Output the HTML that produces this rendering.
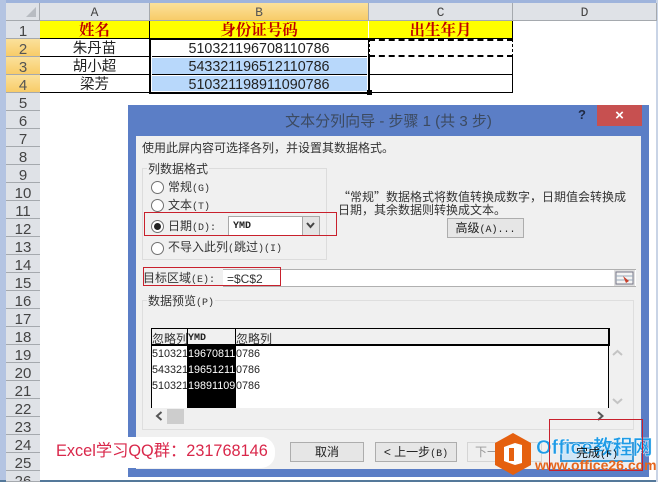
<!DOCTYPE html>
<html><head><meta charset="utf-8">
<style>
html,body{margin:0;padding:0;background:#fff}
#p{position:relative;width:658px;height:482px;overflow:hidden;background:#fff;font-family:"Liberation Sans","WenQuanYi Zen Hei","Noto Sans CJK SC",sans-serif;font-size:12px;color:#222}
#p div{position:absolute;box-sizing:border-box;white-space:nowrap}
.rh{left:6px;width:34px;height:18px;background:#dfe2e7;border-bottom:1px solid #a5a9ae;text-align:center;font:15px/21px "Liberation Sans",sans-serif;color:#444}
.rh.s{background:linear-gradient(#fbe19b,#f8cc68);color:#555}
.ch{top:3px;height:18px;background:#dfe2e7;border-right:1px solid #a5a9ae;border-bottom:1px solid #a5a9ae;text-align:center;font:13px/20px "Liberation Mono",monospace;color:#444}
.y{background:#ffff00;color:#c00000;font-weight:bold;font-size:15.500px;line-height:20px;text-align:center;top:21px;height:17px;font-family:"Liberation Sans","Noto Serif CJK SC",serif}
.c{height:18px;text-align:center;font-size:14.500px;line-height:21px;color:#222}
.n{font-size:14.300px;line-height:20px}
.h{background:#000}
.t{line-height:14px;color:#333}
.l{font:10px/14px "Liberation Mono",monospace}
.q{font-family:"Noto Sans CJK SC",sans-serif}
.r{width:13px;height:13px;border-radius:50%;background:#fff;border:1px solid #707070}
.red{border:1px solid #c8202c}
.b{background:#e6e6e6;border:1px solid #adadad;text-align:center;line-height:18px;color:#222}
.d{font-size:10.800px;line-height:16px;color:#222;overflow:hidden}
</style></head><body><div id="p">
<div style="left:0;top:0;width:658px;height:3px;background:#9fb4dc"></div>
<div style="left:0;top:0;width:6px;height:482px;background:#b4c4e2"></div>
<div style="left:0;top:480px;width:658px;height:2px;background:#54789a"></div>
<div style="left:656px;top:0;width:2px;height:482px;background:#c9d4e6"></div>

<div style="left:6px;top:3px;width:34px;height:18px;background:#dfe2e7;border-right:1px solid #a5a9ae;border-bottom:1px solid #a5a9ae"></div>
<svg style="position:absolute;left:26px;top:7px" width="11" height="11"><path d="M10 0V10H0Z" fill="#b8bcc2"/></svg>
<div class="ch" style="left:40px;width:110px">A</div>
<div class="ch" style="left:150px;width:219px;background:linear-gradient(#fbe19b,#f8cc68);color:#555">B</div>
<div class="ch" style="left:369px;width:144px">C</div>
<div class="ch" style="left:513px;width:144px">D</div>

<div class="rh" style="top:21px">1</div>
<div class="rh s" style="top:39px">2</div>
<div class="rh s" style="top:57px">3</div>
<div class="rh s" style="top:75px">4</div>
<div class="rh" style="top:93px">5</div>
<div class="rh" style="top:111px">6</div>
<div class="rh" style="top:129px">7</div>
<div class="rh" style="top:147px">8</div>
<div class="rh" style="top:165px">9</div>
<div class="rh" style="top:183px">10</div>
<div class="rh" style="top:201px">11</div>
<div class="rh" style="top:219px">12</div>
<div class="rh" style="top:237px">13</div>
<div class="rh" style="top:255px">14</div>
<div class="rh" style="top:273px">15</div>
<div class="rh" style="top:291px">16</div>
<div class="rh" style="top:309px">17</div>
<div class="rh" style="top:327px">18</div>
<div class="rh" style="top:345px">19</div>
<div class="rh" style="top:363px">20</div>
<div class="rh" style="top:381px">21</div>
<div class="rh" style="top:399px">22</div>
<div class="rh" style="top:417px">23</div>
<div class="rh" style="top:435px">24</div>
<div class="rh" style="top:453px">25</div>
<div class="rh" style="top:471px;height:11px;overflow:hidden">26</div>

<div class="y" style="left:40px;width:109px">姓名</div>
<div class="y" style="left:150px;width:218px">身份证号码</div>
<div class="y" style="left:369px;width:143px">出生年月</div>

<div class="h" style="left:40px;top:38px;width:473px;height:1px"></div>
<div class="h" style="left:40px;top:56px;width:473px;height:1px"></div>
<div class="h" style="left:40px;top:74px;width:473px;height:1px"></div>
<div class="h" style="left:40px;top:92px;width:473px;height:1px"></div>
<div class="h" style="left:512px;top:21px;width:1px;height:72px"></div>
<div class="h" style="left:149px;top:21px;width:1px;height:72px"></div>

<div style="left:152px;top:58px;width:215px;height:16px;background:#b8d8fb"></div>
<div style="left:152px;top:76px;width:215px;height:16px;background:#b8d8fb"></div>
<div class="c" style="left:40px;top:39px;width:109px;">朱丹苗</div>
<div class="c" style="left:40px;top:57px;width:109px;">胡小超</div>
<div class="c" style="left:40px;top:75px;width:109px;">梁芳</div>
<div class="c n" style="left:150px;top:39px;width:218px">510321196708110786</div>
<div class="c n" style="left:150px;top:57px;width:218px">543321196512110786</div>
<div class="c n" style="left:150px;top:75px;width:218px">510321198911090786</div>
<div style="left:149px;top:38px;width:221px;height:56px;border:2px solid #000"></div>
<div style="left:151px;top:40px;width:217px;height:52px;border:1px solid #fff"></div>
<div class="h" style="left:367px;top:90px;width:5px;height:5px"></div>
<div style="left:369px;top:39px;width:144px;height:18px;background:#fff;border:1px dashed #000;border-width:2px 1px"></div>

<div style="left:128px;top:105px;width:521px;height:372px;background:#5b7ec6"></div>
<div style="left:136px;top:136px;width:505px;height:333px;background:#f0f0f0"></div>
<div style="left:128px;top:112px;width:521px;text-align:center;font-size:15px;line-height:20px;color:#3c4a60;">文本分列向导 - 步骤 1 (共 3 步)</div>
<div style="left:597px;top:105px;width:45px;height:21px;background:#c75050;color:#fff;text-align:center;font:bold 15px/22px 'Liberation Sans',sans-serif">×</div>
<div style="left:578px;top:107px;font:bold 13px/16px 'Liberation Sans',sans-serif;color:#1f2a44">?</div>

<div class="t" style="left:142px;top:141px">使用此屏内容可选择各列，并设置其数据格式。</div>
<div style="left:142px;top:168px;width:185px;height:92px;border:1px solid #dcdcdc"></div>
<div class="t" style="left:147px;top:162px;background:#f0f0f0;padding:0 1px">列数据格式</div>
<div class="r" style="left:151px;top:181px"></div><div class="t" style="left:168px;top:180px">常规<span class="l">(G)</span></div>
<div class="r" style="left:151px;top:199px"></div><div class="t" style="left:168px;top:198px">文本<span class="l">(T)</span></div>
<div class="r" style="left:151px;top:220px"></div><div style="left:154px;top:223px;width:7px;height:7px;border-radius:50%;background:#222"></div>
<div class="t" style="left:168px;top:219px">日期<span class="l">(D):</span></div>
<div class="r" style="left:151px;top:242px"></div><div class="t" style="left:168px;top:240px">不导入此列<span class="l">(</span>跳过<span class="l">)(I)</span></div>
<div style="left:228px;top:216px;width:92px;height:20px;background:#fff;border:1px solid #a8a8a8;font:bold 10px/20px 'Liberation Mono',monospace;padding-left:4px;color:#222">YMD</div>
<div style="left:302px;top:217px;width:17px;height:18px;background:#e4e4e4;border-left:1px solid #a8a8a8"></div>
<svg style="position:absolute;left:305px;top:222px" width="11" height="8"><path d="M2 1L5.500 5L9 1" fill="none" stroke="#444" stroke-width="2"/></svg>
<div class="red" style="left:144px;top:212px;width:193px;height:24px"></div>

<div class="t" style="left:338px;top:190px;line-height:13px"><span class="q">“</span>常规<span class="q">”</span>数据格式将数值转换成数字，日期值会转换成<br>日期，其余数据则转换成文本。</div>
<div class="b" style="left:447px;top:218px;width:77px;height:20px">高级<span class="l">(A)...</span></div>

<div class="t" style="left:143px;top:271px">目标区域<span class="l">(E):</span></div>
<div style="left:223px;top:269px;width:413px;height:18px;background:#fff;border:1px solid #b0b0b0;border-width:1px 0;font-size:12px;line-height:18px;padding-left:4px;color:#333">=$C$2</div>
<div style="left:614px;top:270px;width:21px;height:16px;background:#dfdfdf"></div>
<svg style="position:absolute;left:615px;top:271px" width="19" height="14"><rect x="1" y="1" width="17" height="12" fill="#f4f4f4" stroke="#778"/><path d="M1 5H18M1 9H18" stroke="#9ab"/><path d="M8 5L14 10L11 12Z" fill="#c8402c"/></svg>
<div class="red" style="left:143px;top:267px;width:138px;height:19px"></div>

<div style="left:142px;top:300px;width:492px;height:130px;border:1px solid #dedede"></div>
<div class="t" style="left:147px;top:294px;background:#f0f0f0;padding:0 1px">数据预览<span class="l">(P)</span></div>

<div style="left:151px;top:345px;width:458px;height:63px;background:#fff"></div>
<div style="left:151px;top:328px;width:459px;height:18px;border:1px solid #000;border-width:1px 2px 2px 1px"></div>
<div class="h" style="left:187px;top:345px;width:48px;height:63px"></div>
<div class="h" style="left:151px;top:328px;width:1px;height:80px"></div>
<div class="h" style="left:187px;top:328px;width:1px;height:18px"></div>
<div class="h" style="left:235px;top:328px;width:1px;height:80px"></div>
<div class="h" style="left:608px;top:345px;width:1px;height:63px"></div>
<div class="t" style="left:152px;top:332px">忽略列</div>
<div style="left:188px;top:332px;font:bold 10px/14px 'Liberation Mono',monospace;color:#222">YMD</div>
<div class="t" style="left:236px;top:332px">忽略列</div>
<div class="d" style="left:152px;top:346px;width:36px">510321</div>
<div class="d" style="left:152px;top:362px;width:36px">543321</div>
<div class="d" style="left:152px;top:378px;width:36px">510321</div>
<div class="d" style="left:188px;top:346px;width:47px;color:#fff">19670811</div>
<div class="d" style="left:188px;top:362px;width:47px;color:#fff">19651211</div>
<div class="d" style="left:188px;top:378px;width:47px;color:#fff">19891109</div>
<div class="d" style="left:236px;top:346px">0786</div>
<div class="d" style="left:236px;top:362px">0786</div>
<div class="d" style="left:236px;top:378px">0786</div>
<div style="left:167px;top:409px;width:17px;height:15px;background:#cdcdcd"></div>
<svg style="position:absolute;left:155px;top:411px" width="9" height="10"><path d="M6.500 1L2 5L6.500 9" fill="none" stroke="#555" stroke-width="2"/></svg>
<svg style="position:absolute;left:596px;top:411px" width="9" height="10"><path d="M2 1L6.500 5L2 9" fill="none" stroke="#555" stroke-width="2"/></svg>
<svg style="position:absolute;left:612px;top:349px" width="11" height="8"><path d="M1 6L5.500 2L10 6" fill="none" stroke="#c4c4c4" stroke-width="2"/></svg>
<svg style="position:absolute;left:612px;top:397px" width="11" height="8"><path d="M1 2L5.500 6L10 2" fill="none" stroke="#c4c4c4" stroke-width="2"/></svg>

<div class="b" style="left:290px;top:442px;width:74px;height:20px">取消</div>
<div class="b" style="left:375px;top:442px;width:82px;height:20px">&lt; 上一步<span class="l">(B)</span></div>
<div class="b" style="left:467px;top:442px;width:75px;height:20px;color:#999;background:#efefef;border-color:#d5d5d5;text-align:left;padding-left:7px">下一步</div>
<div style="left:560px;top:442px;width:74px;height:20px;border:2px solid #3c9ad8;background:#cfe6f7"></div>

<div style="left:50px;top:437px;width:225px;height:31px;background:#fff;border-radius:14px"></div>
<div style="left:56px;top:440px;font-size:16.300px;line-height:22px;color:#d9274a;">Excel学习QQ群：231768146</div>

<svg style="position:absolute;left:495px;top:433px" width="36" height="42"><path d="M18 0L36 10V32L18 42L0 32V10Z" fill="#e5600f"/><path d="M9 14L20 10L27 12V30L20 32L9 28Z" fill="#fff"/><rect x="14" y="15" width="5" height="13" fill="#e5600f"/></svg>
<div style="left:536px;top:435px;font:bold 20px/26px 'Liberation Sans','Noto Sans CJK SC',sans-serif;color:#1e9be6;-webkit-text-stroke:.4px #fff">Office教程网</div>
<div style="left:535px;top:458px;font:bold 14px/15px 'Liberation Sans',sans-serif;color:#e5661e;">www.office26.com</div>
<div style="left:560px;top:443px;width:74px;text-align:center;line-height:20px;color:#111">完成<span class="l">(F)</span></div>
<div class="red" style="left:549px;top:419px;width:94px;height:52px"></div>
</div></body></html>
